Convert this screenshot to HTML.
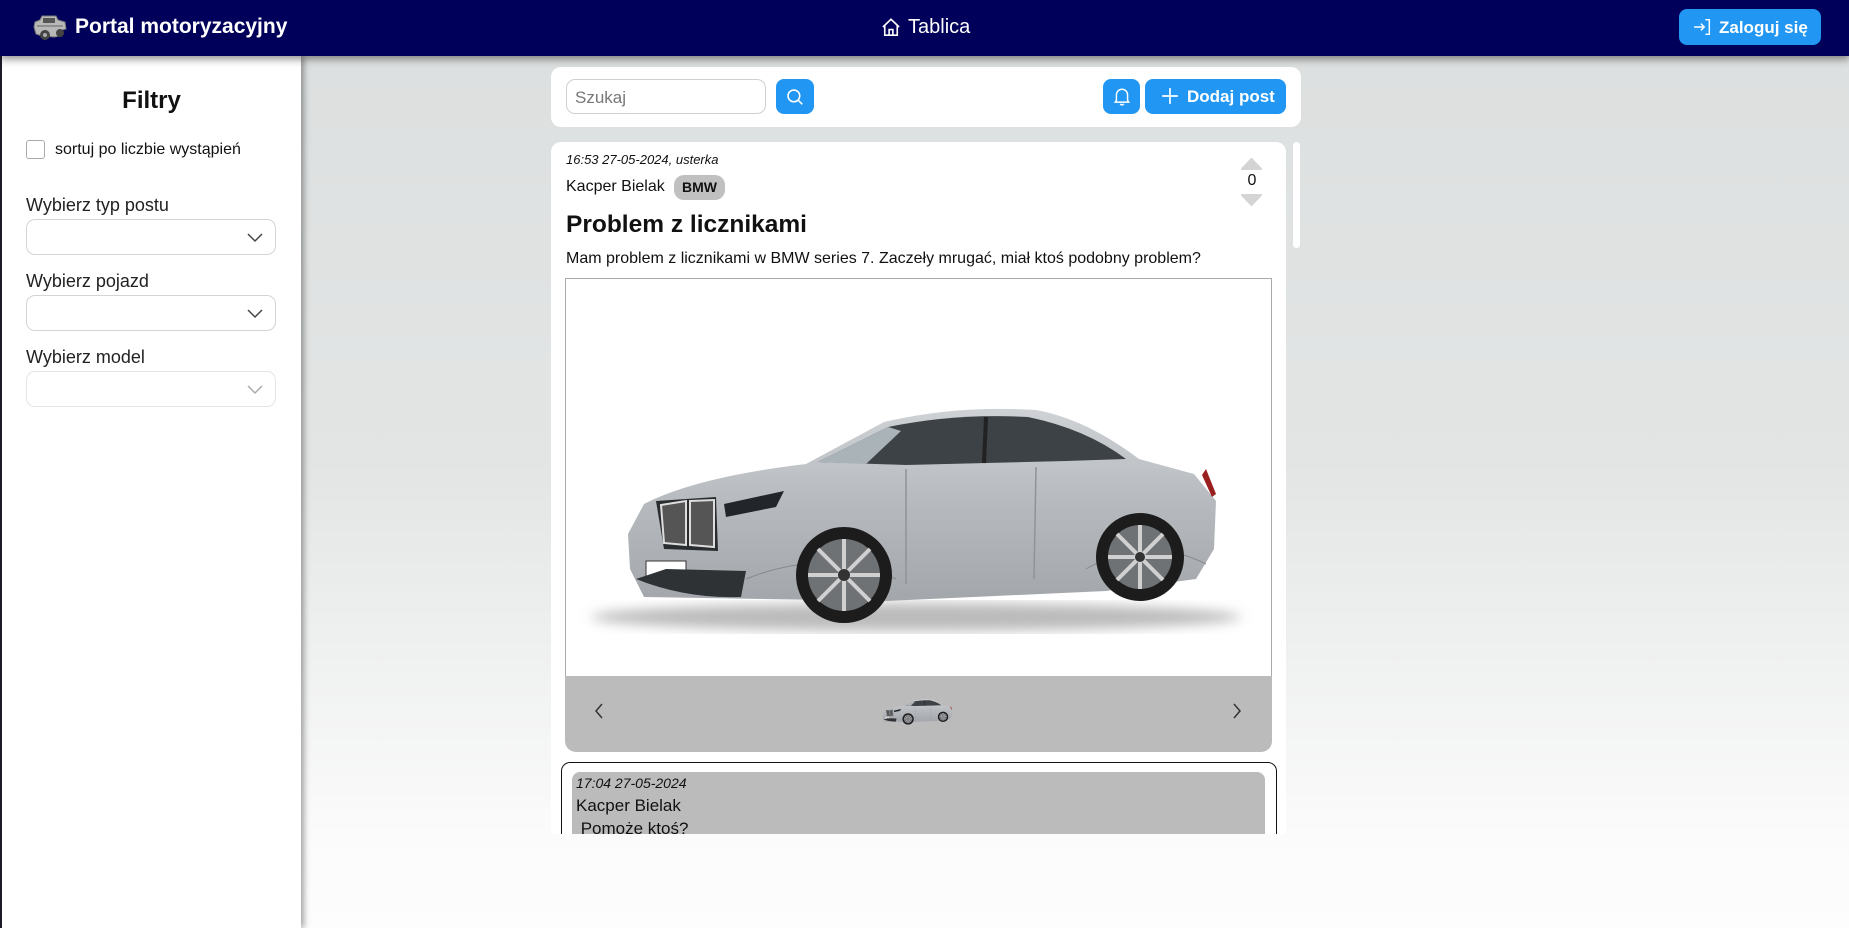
<!DOCTYPE html>
<html><head><meta charset="utf-8"><style>
*{box-sizing:border-box;margin:0;padding:0}
body{width:1849px;height:928px;overflow:hidden;font-family:"Liberation Sans",sans-serif;background:linear-gradient(#dcdfdf 0%,#e3e5e5 50%,#fbfbfb 90%,#fdfdfd 100%);position:relative}
.abs{position:absolute}
.hdr{left:0;top:0;width:1849px;height:56px;background:#00005a;box-shadow:0 3px 8px rgba(0,0,0,.45);z-index:5}
.side{left:0;top:56px;width:301px;height:872px;background:#fff;border-left:2px solid #1a1a2a;box-shadow:3px 0 6px rgba(0,0,0,.35);z-index:4}
.sel{position:absolute;left:26px;width:250px;height:36px;border:1px solid #d4d4d8;border-radius:9px;background:#fff}
.sel svg{position:absolute;right:12px;top:11px}
.lbl{position:absolute;left:26px;font-size:18px;color:#222}
.btn{position:absolute;background:#2196f3;border-radius:8px;color:#fff}
</style></head><body>
<div class="abs hdr">
 <svg class="abs" style="left:32px;top:14px" width="36" height="28" viewBox="0 0 36 28"><path d="M8 6 L10 2 L24 2 L26 6 L33 8 L34 15 L30 16 L28 22 L22 23 L14 22 L10 22 L4 20 L2 13 L3 8 Z" fill="#b8b8b8" stroke="#777" stroke-width="1"/><rect x="11" y="4" width="12" height="5" fill="#555"/><circle cx="13" cy="21" r="5" fill="#444"/><circle cx="13" cy="21" r="2" fill="#aaa"/><circle cx="28" cy="19" r="4" fill="#444"/><path d="M5 12 H31" stroke="#666" stroke-width="1"/></svg>
 <div class="abs" style="left:75px;top:15px;font-size:21px;font-weight:bold;color:#fff">Portal motoryzacyjny</div>
 <svg class="abs" style="left:881px;top:17px" width="20" height="20" viewBox="0 0 16 16" fill="none" stroke="#fff" stroke-width="1.3"><path d="M1.5 8 L8 1.8 L14.5 8"/><path d="M3 6.5 V14.5 H13 V6.5"/><path d="M6.5 14.5 V10 H9.5 V14.5"/></svg>
 <div class="abs" style="left:908px;top:16px;font-size:20px;color:#fff">Tablica</div>
 <div class="btn" style="left:1679px;top:9px;width:142px;height:36px">
  <svg class="abs" style="left:14px;top:9px" width="18" height="18" viewBox="0 0 16 16" fill="none" stroke="#fff" stroke-width="1.3"><path d="M1 8 H10 M7 5 L10 8 L7 11"/><path d="M11 1.5 H14.5 V14.5 H11"/></svg>
  <div class="abs" style="left:40px;top:9px;font-size:17px;font-weight:bold">Zaloguj się</div>
 </div>
</div>
<div class="abs side">
 <div class="abs" style="left:0;width:299px;top:31px;text-align:center;font-size:24px;font-weight:bold;color:#111">Filtry</div>
 <div class="abs" style="left:24px;top:84px;width:19px;height:19px;border:1px solid #aaa;border-radius:3px"></div>
 <div class="abs" style="left:53px;top:85px;font-size:16px;color:#111">sortuj po liczbie wystąpień</div>
 <div class="lbl" style="top:139px;left:24px">Wybierz typ postu</div>
 <div class="sel" style="top:163px;left:24px"><svg width="16" height="12" viewBox="0 0 16 12"><path d="M1 3 L8 10 L15 3" fill="none" stroke="#444" stroke-width="1.5"/></svg></div>
 <div class="lbl" style="top:215px;left:24px">Wybierz pojazd</div>
 <div class="sel" style="top:239px;left:24px"><svg width="16" height="12" viewBox="0 0 16 12"><path d="M1 3 L8 10 L15 3" fill="none" stroke="#444" stroke-width="1.5"/></svg></div>
 <div class="lbl" style="top:291px;left:24px">Wybierz model</div>
 <div class="sel" style="top:315px;left:24px;border-color:#e4e4e7"><svg width="16" height="12" viewBox="0 0 16 12"><path d="M1 3 L8 10 L15 3" fill="none" stroke="#aaa" stroke-width="1.5"/></svg></div>
</div>

<div class="abs" style="left:551px;top:67px;width:750px;height:60px;background:#fff;border-radius:10px">
 <div class="abs" style="left:15px;top:12px;width:200px;height:35px;border:1px solid #d0d0d4;border-radius:9px;font-size:17px;color:#777;padding:8px 8px">Szukaj</div>
 <div class="btn" style="left:225px;top:12px;width:38px;height:35px"><svg class="abs" style="left:10px;top:9px" width="18" height="18" viewBox="0 0 16 16" fill="none" stroke="#fff" stroke-width="1.4"><circle cx="7" cy="7" r="5.2"/><path d="M11 11 L14.5 14.5"/></svg></div>
 <div class="btn" style="left:552px;top:12px;width:37px;height:35px"><svg class="abs" style="left:10px;top:8px" width="18" height="19" viewBox="0 0 16 17" fill="none" stroke="#fff" stroke-width="1.3"><path d="M3 12 V7 A5 5 0 0 1 13 7 V12 L14 13.5 H2 Z"/><path d="M6.5 15 A1.6 1.6 0 0 0 9.5 15"/></svg></div>
 <div class="btn" style="left:594px;top:12px;width:141px;height:35px">
  <svg class="abs" style="left:16px;top:8px" width="18" height="18" viewBox="0 0 16 16" stroke="#fff" stroke-width="1.5"><path d="M8 1 V15 M1 8 H15"/></svg>
  <div class="abs" style="left:42px;top:8px;font-size:17px;font-weight:bold">Dodaj post</div>
 </div>
</div>

<div class="abs" style="left:1293px;top:142px;width:7px;height:106px;background:#fff;border-radius:4px"></div>

<div class="abs" style="left:551px;top:142px;width:735px;height:692px;overflow:hidden;background:#fff;border-radius:10px 10px 0 0">
 <div class="abs" style="left:15px;top:10px;font-size:13px;font-style:italic;color:#111">16:53 27-05-2024, usterka</div>
 <div class="abs" style="left:15px;top:36px;font-size:16px;color:#111">Kacper Bielak</div>
 <div class="abs" style="left:123px;top:33px;width:51px;height:25px;background:#c0c0c0;border-radius:10px;font-size:14px;font-weight:bold;text-align:center;line-height:25px;color:#111">BMW</div>
 <svg class="abs" style="left:690px;top:15px" width="21" height="50" viewBox="0 0 21 50"><path d="M1 12 L10.5 2 L20 12 Z" fill="#d4d4d4" stroke="#d4d4d4" stroke-linejoin="round" stroke-width="2"/><path d="M1 38 L20 38 L10.5 48 Z" fill="#d4d4d4" stroke="#d4d4d4" stroke-linejoin="round" stroke-width="2"/></svg>
 <div class="abs" style="left:693px;top:30px;font-size:16px;color:#111;width:16px;text-align:center">0</div>
 <div class="abs" style="left:15px;top:69px;font-size:24.5px;font-weight:bold;color:#111">Problem z licznikami</div>
 <div class="abs" style="left:15px;top:108px;font-size:16px;color:#111">Mam problem z licznikami w BMW series 7. Zaczeły mrugać, miał ktoś podobny problem?</div>

 <div class="abs" style="left:14px;top:136px;width:707px;height:474px;border-radius:0 0 11px 11px;overflow:hidden;background:#bbb">
  <div class="abs" style="left:0;top:0;width:707px;height:398px;background:#fff;border:1px solid #aaa;border-bottom:none">
   <svg width="707" height="398" viewBox="0 0 707 398">
    <defs>
     <linearGradient id="bd" x1="0" y1="0" x2="0" y2="1"><stop offset="0" stop-color="#cfd2d5"/><stop offset=".5" stop-color="#b6babe"/><stop offset="1" stop-color="#a3a7ab"/></linearGradient>
     <filter id="bl"><feGaussianBlur stdDeviation="6"/></filter>
     <symbol id="car" viewBox="0 0 707 398">
      <ellipse cx="350" cy="338" rx="325" ry="14" fill="#bbb" filter="url(#bl)"/>
      <path d="M78 318 L64 290 L62 255 L78 225 Q130 198 240 185 L318 143 Q390 126 470 131 Q520 140 573 180 L628 195 L650 222 L648 270 L630 300 L540 312 L320 322 Z" fill="url(#bd)"/>
      <path d="M252 183 L322 148 Q390 134 462 138 Q520 150 560 180 L500 182 L340 186 Z" fill="#3d4246"/>
      <path d="M252 183 L322 148 L335 152 L300 185 Z" fill="#aab3b8"/>
      <path d="M420 138 L418 184" stroke="#222" stroke-width="4"/>
      <path d="M90 222 L150 218 L152 272 L98 270 Z" fill="#2a2d30"/>
      <path d="M95 226 L120 222 L120 266 L98 264 Z M124 222 L148 221 L148 268 L124 266 Z" fill="#555" stroke="#ddd" stroke-width="2"/>
      <path d="M158 225 L218 212 L210 228 L160 238 Z" fill="#22262b"/>
      <rect x="80" y="282" width="40" height="16" fill="#fff" stroke="#333"/>
      <path d="M70 300 Q120 320 175 318 L180 292 L100 290 Z" fill="#2f3235"/>
      <path d="M340 190 L340 305 M470 188 L468 300" stroke="#8f9397" stroke-width="1.5"/>
      <path d="M180 300 Q260 268 330 300 M520 290 Q580 255 640 285" stroke="#888" fill="none"/>
      <circle cx="278" cy="296" r="48" fill="#1c1c1c"/>
      <circle cx="278" cy="296" r="36" fill="#6f7275"/>
      <g stroke="#d0d0d0" stroke-width="4"><path d="M278 260 V332 M242 296 H314 M252 270 L304 322 M304 270 L252 322"/></g>
      <circle cx="278" cy="296" r="6" fill="#333"/>
      <circle cx="574" cy="278" r="44" fill="#1c1c1c"/>
      <circle cx="574" cy="278" r="32" fill="#6f7275"/>
      <g stroke="#d0d0d0" stroke-width="4"><path d="M574 246 V310 M542 278 H606 M551 255 L597 301 M597 255 L551 301"/></g>
      <circle cx="574" cy="278" r="5" fill="#333"/>
      <path d="M640 190 L650 215 L646 218 L636 196 Z" fill="#9a2020"/>
     </symbol>
    </defs>
    <use href="#car" x="0" y="0" width="707" height="398"/>
   </svg>
  </div>
  <svg class="abs" style="left:28px;top:424px" width="12" height="18" viewBox="0 0 12 18"><path d="M9 2 L3 9 L9 16" fill="none" stroke="#333" stroke-width="1.5"/></svg>
  <svg class="abs" style="left:666px;top:424px" width="12" height="18" viewBox="0 0 12 18"><path d="M3 2 L9 9 L3 16" fill="none" stroke="#333" stroke-width="1.5"/></svg>
  <svg class="abs" style="left:310px;top:406px" width="84" height="47" viewBox="0 0 707 398"><use href="#car"/></svg>
 </div>

 <div class="abs" style="left:10px;top:620px;width:716px;height:120px;border:1.5px solid #111;border-radius:9px">
  <div class="abs" style="left:10px;top:9px;width:693px;height:110px;background:#bbb;border-radius:8px">
   <div class="abs" style="left:4px;top:3px;font-size:14px;font-style:italic;color:#111">17:04 27-05-2024</div>
   <div class="abs" style="left:4px;top:24px;font-size:17px;color:#111">Kacper Bielak</div>
   <div class="abs" style="left:4px;top:47px;font-size:17px;color:#111">&nbsp;Pomoże ktoś?</div>
  </div>
 </div>
</div>
</body></html>
